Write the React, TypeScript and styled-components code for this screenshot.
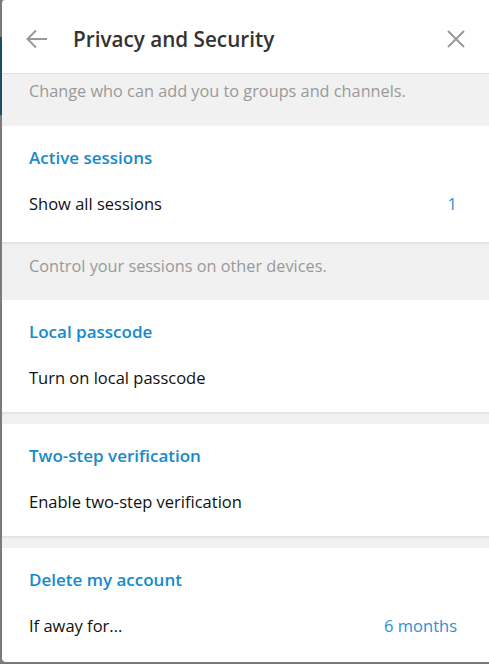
import styled, { createGlobalStyle } from "styled-components";

const GlobalStyle = createGlobalStyle`
  html, body {
    margin: 0;
    padding: 0;
    height: 100%;
    background: #7a7a7a;
  }
  #root {
    height: 100%;
  }
  * {
    box-sizing: border-box;
  }
`;

const StyledPage = styled.div`
  display: flex;
  height: 664px;
  overflow: hidden;
  font-family: "Open Sans", "Noto Sans", sans-serif;
`;

const StyledBackdrop = styled.div`
  width: 2px;
  flex-shrink: 0;
  background: #7a7a7a;
  padding-top: 37px;
`;

const StyledBackdropAccent = styled.div`
  height: 78px;
  background: #1f4d66;
`;

const StyledPanel = styled.div`
  flex-grow: 1;
  display: flex;
  flex-direction: column;
  height: 662px;
  background: #ffffff;
  border-radius: 3px 0 0 4px;
  overflow: hidden;
`;

const StyledHeader = styled.div`
  display: flex;
  align-items: center;
  height: 74px;
  padding: 4px 20px 0 22px;
  border-bottom: 1px solid #e0e0e0;
`;

const StyledIconButton = styled.div`
  display: flex;
  align-items: center;
  justify-content: center;
  width: 26px;
  height: 26px;
  color: #999999;
`;

const StyledTitle = styled.div`
  flex-grow: 1;
  margin-left: 23px;
  font-size: 20.7px;
  font-weight: 600;
  color: #333333;
  line-height: 28px;
`;

const StyledNote = styled.div<{ $top: number; $bottom: number; $shadow?: boolean }>`
  padding: ${(p) => p.$top}px 27px ${(p) => p.$bottom}px;
  background: #f1f1f1;
  font-size: 16.3px;
  line-height: 20px;
  color: #999999;
  box-shadow: ${(p) => (p.$shadow ? "inset 0 3px 3px -2px rgba(0, 0, 0, 0.1)" : "none")};
`;

const StyledGap = styled.div`
  height: 12px;
  background: #f1f1f1;
  box-shadow: inset 0 3px 3px -2px rgba(0, 0, 0, 0.1);
`;

const StyledSection = styled.div<{ $bottom: number }>`
  display: flex;
  flex-direction: column;
  gap: 23px;
  padding: 20px 32px ${(p) => p.$bottom}px 27px;
  background: #ffffff;
`;

const StyledSectionTitle = styled.div`
  font-size: 17px;
  font-weight: 600;
  line-height: 24px;
  color: #168acd;
`;

const StyledRow = styled.div`
  display: flex;
  align-items: center;
  justify-content: space-between;
  font-size: 16.5px;
  line-height: 22px;
  color: #111111;
`;

const StyledRowValue = styled.span`
  color: #2d8fd5;
`;

function BackIcon() {
  return (
    <svg width="24" height="24" viewBox="0 0 24 24" fill="none">
      <path
        d="M22 12H3M11 3.5L2.5 12L11 20.5"
        stroke="currentColor"
        strokeWidth="2"
      />
    </svg>
  );
}

function CloseIcon() {
  return (
    <svg width="20" height="20" viewBox="0 0 20 20" fill="none">
      <path d="M2 2L18 18M18 2L2 18" stroke="currentColor" strokeWidth="2" />
    </svg>
  );
}

type SectionProps = {
  title: string;
  label: string;
  value?: string;
  bottom: number;
};

function Section({ title, label, value, bottom }: SectionProps) {
  return (
    <StyledSection $bottom={bottom}>
      <StyledSectionTitle>{title}</StyledSectionTitle>
      <StyledRow>
        <span>{label}</span>
        {value && <StyledRowValue>{value}</StyledRowValue>}
      </StyledRow>
    </StyledSection>
  );
}

function App() {
  return (
    <>
      <GlobalStyle />
      <StyledPage>
        <StyledBackdrop>
          <StyledBackdropAccent />
        </StyledBackdrop>
        <StyledPanel>
          <StyledHeader>
            <StyledIconButton>
              <BackIcon />
            </StyledIconButton>
            <StyledTitle>Privacy and Security</StyledTitle>
            <StyledIconButton>
              <CloseIcon />
            </StyledIconButton>
          </StyledHeader>
          <StyledNote $top={7} $bottom={25}>
            Change who can add you to groups and channels.
          </StyledNote>
          <Section title="Active sessions" label="Show all sessions" value="1" bottom={27} />
          <StyledNote $top={14} $bottom={24} $shadow>
            Control your sessions on other devices.
          </StyledNote>
          <Section title="Local passcode" label="Turn on local passcode" bottom={23} />
          <StyledGap />
          <Section title="Two-step verification" label="Enable two-step verification" bottom={23} />
          <StyledGap />
          <Section title="Delete my account" label="If away for..." value="6 months" bottom={22} />
        </StyledPanel>
      </StyledPage>
    </>
  );
}

export default App;
